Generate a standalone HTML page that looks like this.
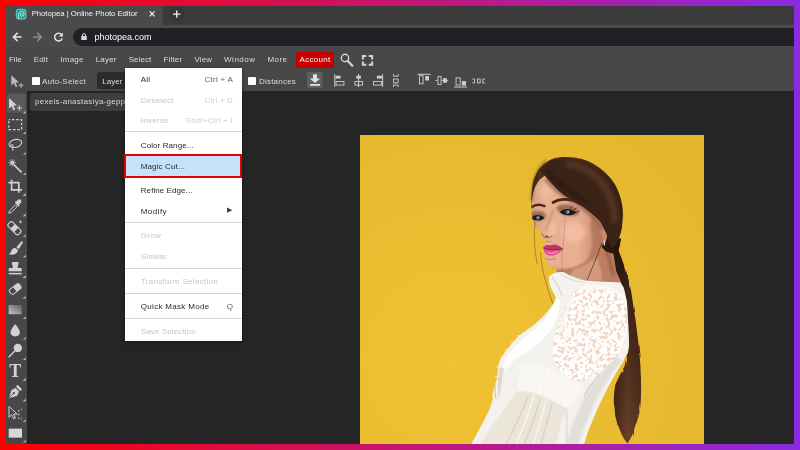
<!DOCTYPE html>
<html lang="en">
<head>
<meta charset="utf-8">
<title>Photopea | Online Photo Editor</title>
<style>
*{box-sizing:border-box;margin:0;padding:0}
html,body{width:800px;height:450px;overflow:hidden}
body{background:linear-gradient(90deg,#ff0000 0%,#8a2be2 100%);font-family:"Liberation Sans",sans-serif;position:relative}
#win{will-change:transform;position:absolute;left:6px;top:6px;width:787.8px;height:437.75px;overflow:hidden;background:#252525}
.abs{position:absolute}
/* all children of #win positioned relative to page coords minus 6 */
#tabstrip{left:0;top:0;width:788px;height:19px;background:#3b3b3b}
#tab{left:0;top:0;width:157px;height:19px;background:#4a4a4a;border-radius:4px 4px 0 0}
#tabtitle{left:25.7px;top:3.2px;font-size:7.7px;line-height:10px;color:#f4f4f4;white-space:nowrap}
#navbar{left:0;top:19px;width:788px;height:22px;background:#4a4a4a}
#omni{left:67px;top:22px;width:740px;height:17.5px;background:#202124;border-radius:9px}
#url{left:88.5px;top:25.8px;font-size:9px;line-height:11px;color:#ffffff;white-space:nowrap}
#menubar{left:0;top:41px;width:788px;height:22px;background:#474747}
.mi{position:absolute;top:49.3px;font-size:8px;line-height:10px;color:#dcdcdc;white-space:nowrap}
#account{left:290px;top:45.5px;width:37.5px;height:16px;background:#c60000;border-radius:3px}
#optbar{left:0;top:63px;width:788px;height:21.5px;background:#474747}
.ot{position:absolute;top:70.6px;font-size:8px;line-height:10px;color:#dcdcdc;white-space:nowrap}
.cb{position:absolute;width:7.5px;height:7.5px;background:#fff;border-radius:1px;top:71px}
#layersel{left:91px;top:66px;width:60px;height:17px;background:#2b2b2b;border-radius:2px}
#tools{left:0;top:83px;width:21.3px;height:362px;background:#474747;padding-top:1.5px}
#doctab{left:23.5px;top:86.5px;width:140px;height:18px;background:#3e3e3e;border-radius:3px}
#doctitle{left:29px;top:91.2px;font-size:8px;line-height:10px;letter-spacing:.27px;color:#d8d8d8;white-space:nowrap}
#photo{left:354px;top:128.5px;width:344.2px;height:309.3px;overflow:hidden}
#menu{left:119px;top:62.2px;width:116.5px;height:273px;background:#fff;box-shadow:0 1px 4px rgba(0,0,0,.4)}
.m{position:absolute;left:15.75px;margin-top:1.2px;font-size:8px;line-height:10px;color:#2a2a2a;white-space:nowrap}
.m.d{color:#c4c4c4}
.k{position:absolute;right:8.5px;margin-top:1.2px;font-size:8px;line-height:10px;color:#606060;white-space:nowrap}
.k.d{color:#cfcfcf}
.sep{position:absolute;left:0;width:116.5px;height:1px;background:#d4d4d4}
#hl{position:absolute;left:-.75px;top:85.6px;width:118px;height:24.4px;background:#c4e3fb;border:2px solid #e00000}
</style>
</head>
<body>
<div id="win">
  <div id="tabstrip" class="abs"></div>
  <div id="tab" class="abs"></div>
  <div id="tabtitle" class="abs">Photopea | Online Photo Editor</div>
  <div id="navbar" class="abs"></div>
  <div id="omni" class="abs"></div>
  <div id="url" class="abs">photopea.com</div>
  <div id="chromeicons" class="abs" style="left:0;top:0"><!--C--><svg width="200" height="42" viewBox="6 6 200 42" style="display:block">
<path d="M162.5 24.8 h4 q-4 0 -4 -4z" fill="#4a4a4a"/>
<circle cx="176.7" cy="14.1" r="8.3" fill="#363636"/>
<rect x="16.3" y="9.3" width="9.7" height="9.7" rx="2.2" fill="#17a093" stroke="#a9ebe2" stroke-width=".7"/><path d="M18.6 18.6 V14.6 Q18.6 11.3 21.6 11.3 Q24.2 11.4 24.2 13.9 Q24.1 16.3 21.7 16.3 Q20.2 16.2 20.2 14.6 Q20.3 13.4 21.5 13.4 Q22.5 13.5 22.4 14.4" fill="none" stroke="#b9f1ea" stroke-width=".9" stroke-linecap="round"/>
<path d="M149.7 11.4 L154.5 16.4 M154.5 11.4 L149.7 16.4" stroke="#f0f0f0" stroke-width="1.3"/>
<path d="M173 14.1 H180.4 M176.7 10.4 V17.8" stroke="#f0f0f0" stroke-width="1.3"/>
<path d="M21.6 37 H13.6 M17.6 32.9 L13.4 37 L17.6 41.1" fill="none" stroke="#e4e4e4" stroke-width="1.5" stroke-linejoin="miter"/>
<path d="M33.2 37 H41.2 M37.2 32.9 L41.4 37 L37.2 41.1" fill="none" stroke="#8c8c8c" stroke-width="1.5"/>
<path d="M61.6 34.6 A3.9 3.9 0 1 0 62.2 38.4" fill="none" stroke="#e4e4e4" stroke-width="1.5"/><path d="M62.9 32.4 V36.4 H58.9 Z" fill="#e4e4e4"/>
<rect x="81.2" y="36" width="5.6" height="4.1" rx=".6" fill="#d6d6d6"/><path d="M82.4 36.2 V35 Q82.4 33.6 84 33.6 Q85.6 33.6 85.6 35 V36.2" fill="none" stroke="#d6d6d6" stroke-width="1"/>
</svg><!--/C--></div>
  <div id="menubar" class="abs"></div>
  <span class="mi" style="left:3px;letter-spacing:-0.035px">File</span>
  <span class="mi" style="left:27.75px;letter-spacing:0.113px">Edit</span>
  <span class="mi" style="left:54.3px;letter-spacing:0.233px">Image</span>
  <span class="mi" style="left:89.7px;letter-spacing:0.197px">Layer</span>
  <span class="mi" style="left:122.7px;letter-spacing:0.044px">Select</span>
  <span class="mi" style="left:157.5px;letter-spacing:0.161px">Filter</span>
  <span class="mi" style="left:188.5px;letter-spacing:0.137px">View</span>
  <span class="mi" style="left:218px;letter-spacing:0.524px">Window</span>
  <span class="mi" style="left:261.4px;letter-spacing:0.441px">More</span>
  <div id="account" class="abs"></div>
  <span class="mi" style="left:293.6px;color:#fff;letter-spacing:0.299px" id="acct">Account</span>
  <div id="optbar" class="abs"></div>
  <div class="cb" style="left:26px"></div>
  <span class="ot" style="left:36px;letter-spacing:0.240px">Auto-Select</span>
  <div id="layersel" class="abs"></div>
  <span class="ot" style="left:96.3px;letter-spacing:-0.013px">Layer</span>
  <div class="cb" style="left:242px"></div>
  <span class="ot" style="left:253px;letter-spacing:0.208px">Distances</span>
  <div id="ppicons" class="abs" style="left:324px;top:41px"><!--P--><svg width="50" height="45" viewBox="330 47 50 45" style="display:block"><circle cx="345" cy="58" r="3.7" fill="none" stroke="#d2d2d2" stroke-width="1.4"/><path d="M347.8 61 L352.3 65.7" stroke="#d2d2d2" stroke-width="2.3" stroke-linecap="round"/><path d="M362.9 59.4 V56 H366.3 M368.7 56 H372.1 V59.4 M372.1 61.4 V64.8 H368.7 M366.3 64.8 H362.9 V61.4" fill="none" stroke="#d2d2d2" stroke-width="2"/></svg><!--/P--></div>
  <div id="mvicon" class="abs" style="left:3px;top:67px"><!--M--><svg width="16" height="16" viewBox="9 73 16 16" style="display:block"><path d="M11.3 75.3 V85.6 L13.9 83.3 L15.8 87.3 L17.4 86.5 L15.6 82.6 H19.1 Z" fill="#b8b8b8"/><path d="M18.6 85.3 H23.4 M21 82.9 V87.7" stroke="#b8b8b8" stroke-width="1.1"/></svg><!--/M--></div>
  <div id="opticons" class="abs" style="left:294px;top:62px"><!--O--><svg width="200" height="25" viewBox="300 68 200 25" style="display:block">
<rect x="306.9" y="71.75" width="15.6" height="16.25" rx="2" fill="#5e5e5e"/><path d="M313 74.2 h4 v4.4 h3.2 l-5.2 4.4 l-5.2 -4.4 h3.2z" fill="#e2e2e2"/><rect x="310" y="84" width="10" height="1.8" fill="#e2e2e2"/>
<path d="M334.75 74.20 L334.75 86.80" stroke="#cfcfcf" stroke-width="1.00"/><rect x="335.60" y="75.75" width="5.00" height="2.85" fill="#cfcfcf"/><rect x="336.05" y="81.55" width="7.90" height="3.50" fill="none" stroke="#cfcfcf" stroke-width="0.90"/>
<path d="M358.60 74.00 L358.60 87.00" stroke="#cfcfcf" stroke-width="1.00"/><rect x="356.25" y="75.75" width="4.65" height="2.85" fill="#cfcfcf"/><rect x="354.85" y="81.55" width="7.80" height="3.50" fill="none" stroke="#cfcfcf" stroke-width="0.90"/>
<path d="M382.60 74.20 L382.60 86.80" stroke="#cfcfcf" stroke-width="1.00"/><rect x="376.90" y="75.75" width="5.00" height="2.85" fill="#cfcfcf"/><rect x="373.55" y="81.55" width="7.90" height="3.50" fill="none" stroke="#cfcfcf" stroke-width="0.90"/>
<path d="M393.5 74.2 v2 h4.6 v-2 M393.5 87 v-2 h4.6 v2" fill="none" stroke="#cfcfcf" stroke-width=".9"/><rect x="393.55" y="79.05" width="4.50" height="3.80" fill="none" stroke="#cfcfcf" stroke-width="0.90"/>
<path d="M417.50 74.30 L430.60 74.30" stroke="#cfcfcf" stroke-width="1.00"/><rect x="419.45" y="75.70" width="3.60" height="8.10" fill="none" stroke="#cfcfcf" stroke-width="0.90"/><rect x="425.25" y="76.10" width="3.75" height="4.40" fill="#cfcfcf"/>
<path d="M435.25 80.50 L448.10 80.50" stroke="#cfcfcf" stroke-width="0.80"/><rect x="437.5" y="76.1" width="4" height="8.8" fill="#474747"/><rect x="437.95" y="76.55" width="3.10" height="7.90" fill="none" stroke="#cfcfcf" stroke-width="0.90"/><rect x="443.10" y="78.25" width="3.80" height="4.50" fill="#cfcfcf"/>
<path d="M454.00 87.00 L466.90 87.00" stroke="#cfcfcf" stroke-width="1.00"/><rect x="456.05" y="77.85" width="4.10" height="7.20" fill="none" stroke="#cfcfcf" stroke-width="0.90"/><rect x="461.90" y="81.10" width="4.10" height="4.40" fill="#cfcfcf"/>
<path d="M472.3 79 h2.2 v3.9 h-2.2 M485 79 h-2.2 v3.9 h2.2" fill="none" stroke="#cfcfcf" stroke-width=".9"/><rect x="477.35" y="79.05" width="2.80" height="3.80" fill="none" stroke="#cfcfcf" stroke-width="0.90"/>
</svg><!--/O--></div>
  <div id="tools" class="abs"><!--T--><svg width="21.3" height="353" viewBox="6 90.5 21.3 353" style="display:block">
<defs><linearGradient id="tg" x1="0" x2="1" y1="1" y2="0"><stop offset="0" stop-color="#c8c8c8"/><stop offset="1" stop-color="#5c5c5c"/></linearGradient></defs>
<path d="M7 112.3 V97 Q7 93 11 93 H25.5 V112.3 Z" fill="#5a5a5a"/>
<path d="M25.6 109.30 v3.6 h-3.6 q3.2 -.3 3.6 -3.6z" fill="#d2d2d2"/>
<path d="M25.6 129.86 v3.6 h-3.6 q3.2 -.3 3.6 -3.6z" fill="#d2d2d2"/>
<path d="M25.6 150.42 v3.6 h-3.6 q3.2 -.3 3.6 -3.6z" fill="#d2d2d2"/>
<path d="M25.6 170.98 v3.6 h-3.6 q3.2 -.3 3.6 -3.6z" fill="#d2d2d2"/>
<path d="M25.6 191.54 v3.6 h-3.6 q3.2 -.3 3.6 -3.6z" fill="#d2d2d2"/>
<path d="M25.6 212.10 v3.6 h-3.6 q3.2 -.3 3.6 -3.6z" fill="#d2d2d2"/>
<path d="M25.6 232.66 v3.6 h-3.6 q3.2 -.3 3.6 -3.6z" fill="#d2d2d2"/>
<path d="M25.6 253.22 v3.6 h-3.6 q3.2 -.3 3.6 -3.6z" fill="#d2d2d2"/>
<path d="M25.6 273.78 v3.6 h-3.6 q3.2 -.3 3.6 -3.6z" fill="#d2d2d2"/>
<path d="M25.6 294.34 v3.6 h-3.6 q3.2 -.3 3.6 -3.6z" fill="#d2d2d2"/>
<path d="M25.6 314.90 v3.6 h-3.6 q3.2 -.3 3.6 -3.6z" fill="#d2d2d2"/>
<path d="M25.6 335.46 v3.6 h-3.6 q3.2 -.3 3.6 -3.6z" fill="#d2d2d2"/>
<path d="M25.6 356.02 v3.6 h-3.6 q3.2 -.3 3.6 -3.6z" fill="#d2d2d2"/>
<path d="M25.6 376.58 v3.6 h-3.6 q3.2 -.3 3.6 -3.6z" fill="#d2d2d2"/>
<path d="M25.6 397.14 v3.6 h-3.6 q3.2 -.3 3.6 -3.6z" fill="#d2d2d2"/>
<path d="M25.6 417.70 v3.6 h-3.6 q3.2 -.3 3.6 -3.6z" fill="#d2d2d2"/>
<path d="M25.6 438.26 v3.6 h-3.6 q3.2 -.3 3.6 -3.6z" fill="#d2d2d2"/>
<g transform="translate(15.20 103.50)"><path d="M-6.2 -6 V4.6 L-3.6 2.2 L-1.7 6.3 L0 5.5 L-1.8 1.6 H1.8 Z" fill="#d2d2d2"/><path d="M1.8 4 H6.6 M4.2 1.6 V6.4" stroke="#d2d2d2" stroke-width="1.1" fill="none"/></g>
<g transform="translate(15.20 124.06)"><rect x="-6.4" y="-5" width="12.8" height="10" fill="none" stroke="#d2d2d2" stroke-width="1.2" stroke-dasharray="2.6 1.7" stroke-dashoffset="1.3"/></g>
<g transform="translate(15.20 144.62)"><ellipse cx="0.6" cy="-1.6" rx="6.4" ry="3.9" transform="rotate(-14)" fill="none" stroke="#d2d2d2" stroke-width="1.1"/><path d="M-3.6 1.8 q-1.8 -1.8 -.2 -2.6 q1.8 -.4 1.6 1.6 q-.4 2.2 -.2 4.8" fill="none" stroke="#d2d2d2" stroke-width="1"/></g>
<g transform="translate(15.20 165.18)"><path d="M-1.6 -1.2 L6.4 6.6" stroke="#d2d2d2" stroke-width="1.7"/><path d="M-3 -6.6 v7.2 M-6.6 -3 h7.2 M-5.6 -5.6 l5.2 5.2 M-.4 -5.6 l-5.2 5.2" stroke="#d2d2d2" stroke-width=".9"/><circle cx="-3" cy="-3" r="1.7" fill="#d2d2d2"/></g>
<g transform="translate(15.20 185.74)"><path d="M-3.6 -6.6 V3.6 H6.8 M-6.8 -3.6 H3.6 V6.6" fill="none" stroke="#d2d2d2" stroke-width="1.7"/></g>
<g transform="translate(15.20 206.30)"><path d="M-6.4 6.4 l.8 -2.6 l6 -6 l1.8 1.8 l-6 6 z" fill="none" stroke="#d2d2d2" stroke-width="1"/><path d="M.2 -3.6 l3.4 3.4 l1 -1 l-.9 -.9 l2 -2 q1.2 -1.6 -.2 -2.9 q-1.4 -1.2 -2.8 0 l-2 2 l-.9 -.9 z" fill="#d2d2d2"/></g>
<g transform="translate(15.20 226.86)"><g transform="translate(-.8 .8) rotate(-45)"><rect x="-3.1" y="-7.4" width="6.2" height="14.8" rx="2.2" fill="none" stroke="#d2d2d2" stroke-width="1.1"/><rect x="-3.1" y="-2.6" width="6.2" height="5.2" fill="#d2d2d2"/></g><path d="M5.2 -7 v3 M3.7 -5.5 h3" stroke="#d2d2d2" stroke-width=".9"/></g>
<g transform="translate(15.20 247.42)"><path d="M6.6 -6.8 l-5.4 6.2 l2.2 2 l4.4 -6.8 z" fill="#d2d2d2"/><path d="M.4 .2 l2.4 2.2 q-.6 3.4 -4.4 4.2 q-2.6 .5 -5 -.6 q2.4 -1 2.8 -3.4 q.8 -3.2 4.2 -2.4z" fill="#d2d2d2"/></g>
<g transform="translate(15.20 267.98)"><path d="M-2.6 -6.6 h5.2 q1 0 .8 1.2 l-.9 3.6 v1.4 h3 q1 0 1 1 v2.2 h-13 v-2.2 q0 -1 1 -1 h3 v-1.4 l-.9 -3.6 q-.2 -1.2 .8 -1.2z" fill="#d2d2d2"/><rect x="-6.5" y="4.4" width="13" height="1.5" fill="#d2d2d2"/></g>
<g transform="translate(15.20 288.54)"><g transform="scale(.88) rotate(-38)"><rect x="-7" y="-3.4" width="14" height="6.8" rx="2.4" fill="none" stroke="#d2d2d2" stroke-width="1.1"/><path d="M-.6 -3.4 h5.2 q2.4 0 2.4 2.4 v2 q0 2.4 -2.4 2.4 h-5.2z" fill="#d2d2d2"/></g></g>
<g transform="translate(15.20 309.10)"><rect x="-6.6" y="-4.6" width="13" height="9.2" fill="url(#tg)"/></g>
<g transform="translate(15.20 329.66)"><path transform="scale(.92)" d="M0 -6.8 q5 6 5 9.2 q0 4.4 -5 4.4 q-5 0 -5 -4.4 q0 -3.2 5 -9.2z" fill="#d2d2d2"/></g>
<g transform="translate(15.20 350.22)"><circle cx="2.6" cy="-2.8" r="4.2" fill="#d2d2d2"/><path d="M-.4 .4 L-6.6 6.6" stroke="#d2d2d2" stroke-width="1.4"/></g>
<g transform="translate(15.20 370.78)"><text x="0" y="6" text-anchor="middle" font-family="Liberation Serif,serif" font-weight="bold" font-size="18" fill="#d2d2d2">T</text></g>
<g transform="translate(15.20 391.34)"><path d="M2.4 -7 l4.6 4.6 l-2 1.6 l-4.2 -4.2 z" fill="#d2d2d2"/><path d="M.2 -4.2 l4 4 l-2.2 4.6 l-8.6 2.4 l2.4 -8.6 z M-6 6 l4.4 -4.4" fill="#d2d2d2" stroke="#474747" stroke-width=".7"/><circle cx="-1.4" cy="1.4" r="1.1" fill="#474747"/></g>
<g transform="translate(15.20 411.90)"><path d="M-6.2 -6 V5 L-3.4 2.4 L-1.5 6.4 L.2 5.6 L-1.6 1.8 H2 Z" fill="none" stroke="#d2d2d2" stroke-width="1"/><path d="M3.6 -2.6 v2 M3.6 1.2 v2 M3.6 5 v1.6 M5.6 -3 h1.2 M5.6 6.6 h1.2" stroke="#d2d2d2" stroke-width=".9"/></g>
<g transform="translate(15.20 432.76)"><rect x="-6.5" y="-4.6" width="13.3" height="9" fill="#d8d8d8"/></g>
</svg><!--/T--></div>
  <div id="doctab" class="abs"></div>
  <div id="doctitle" class="abs">pexels-anastasiya-gepp</div>
  <div id="photo" class="abs">
<svg width="344" height="309.3" viewBox="360 134.5 344 309.3" preserveAspectRatio="none" style="display:block">
<defs>
<radialGradient id="bg" cx="455" cy="360" r="310" gradientUnits="userSpaceOnUse"><stop offset="0" stop-color="#f0c232"/><stop offset=".5" stop-color="#eabc31"/><stop offset="1" stop-color="#e3b62d"/></radialGradient>
<linearGradient id="hairg" x1="548" y1="160" x2="622" y2="240" gradientUnits="userSpaceOnUse"><stop offset="0" stop-color="#50301f"/><stop offset=".4" stop-color="#432719"/><stop offset="1" stop-color="#28150e"/></linearGradient>
<linearGradient id="pony" x1="0" y1="240" x2="0" y2="443" gradientUnits="userSpaceOnUse"><stop offset="0" stop-color="#2c1810"/><stop offset=".45" stop-color="#4a2b1b"/><stop offset="1" stop-color="#6a4129"/></linearGradient>
<linearGradient id="ponys" x1="612" y1="0" x2="643" y2="0" gradientUnits="userSpaceOnUse"><stop offset="0" stop-color="#1c0e08" stop-opacity=".55"/><stop offset=".5" stop-color="#1c0e08" stop-opacity="0"/><stop offset="1" stop-color="#1c0e08" stop-opacity=".35"/></linearGradient>
<linearGradient id="skin" x1="532" y1="0" x2="606" y2="0" gradientUnits="userSpaceOnUse"><stop offset="0" stop-color="#d9a182"/><stop offset=".2" stop-color="#e8b092"/><stop offset=".6" stop-color="#e9b094"/><stop offset="1" stop-color="#c08364"/></linearGradient>
<filter id="b05" x="-10%" y="-10%" width="120%" height="120%"><feGaussianBlur stdDeviation=".45"/></filter>
<filter id="b1" x="-30%" y="-30%" width="160%" height="160%"><feGaussianBlur stdDeviation="1.1"/></filter>
<filter id="b2" x="-40%" y="-40%" width="180%" height="180%"><feGaussianBlur stdDeviation="2.4"/></filter>
<filter id="b4" x="-40%" y="-40%" width="180%" height="180%"><feGaussianBlur stdDeviation="4"/></filter>
<filter id="lacef" x="0" y="0" width="100%" height="100%"><feTurbulence type="fractalNoise" baseFrequency=".28" numOctaves="2" seed="11" result="n"/><feColorMatrix in="n" type="matrix" values="0 0 0 0 1  0 0 0 0 1  0 0 0 0 1  0 0 0 7 -2.6" result="w"/><feComposite in="w" in2="SourceGraphic" operator="in"/></filter>
<filter id="frz" x="-5%" y="-5%" width="110%" height="110%"><feTurbulence type="fractalNoise" baseFrequency=".35 .05" numOctaves="2" seed="3" result="n"/><feDisplacementMap in="SourceGraphic" in2="n" scale="3"/></filter>
</defs>
<rect x="360" y="134" width="344" height="311" fill="url(#bg)"/>
<!-- ponytail -->
<g filter="url(#frz)">
<path id="pt" d="M611 238 L612 250 C613 258 614 264 615 270 C618 277 621 284 623 290 C624.5 297 625.5 304 626 310 C627 317 627.6 324 628 330 L629 345 C627.5 352 626 359 624.5 366 C621 372 618 378 615.5 384 C614 391 613.6 398 614 405 C614.6 412 616 420 618.5 426 C621 433 624 439 627.5 443 C631 438 633.5 432 635 426 C638 419 639.8 412 640.4 405 C641 398 641.2 391 641 384 L640.4 366 C640 359 639.4 352 638.6 345 C637.6 336 636.6 328 635.6 320 L634 310 C633 303 632 296 631 290 C629.6 283 628 276 626 270 C623.5 263 621 256 618.5 250 L621 238 Z" fill="url(#pony)"/>
</g>
<path d="M611 238 L612 250 C613 258 614 264 615 270 C618 277 621 284 623 290 C624.5 297 625.5 304 626 310 C627 317 627.6 324 628 330 L629 345 C627.5 352 626 359 624.5 366 C621 372 618 378 615.5 384 C614 391 613.6 398 614 405 C614.6 412 616 420 618.5 426 C621 433 624 439 627.5 443 C631 438 633.5 432 635 426 C638 419 639.8 412 640.4 405 C641 398 641.2 391 641 384 L640.4 366 C640 359 639.4 352 638.6 345 C637.6 336 636.6 328 635.6 320 L634 310 C633 303 632 296 631 290 C629.6 283 628 276 626 270 C623.5 263 621 256 618.5 250 L621 238 Z" fill="url(#ponys)"/>
<!-- neck -->
<path d="M566 266 L604 246 L613 250 L616 270 L622 284 L560 284 L556 270 Z" fill="#bb7f60"/>
<path d="M574 268 C582 266 590 262 597 257 C600 264 602 272 602 281 L566 281 Z" fill="#d29a7b" filter="url(#b1)"/>
<path d="M606 248 C609 256 611 266 614 276" stroke="#8e5a42" stroke-width="4" fill="none" opacity=".6" filter="url(#b1)"/>
<path d="M600 236 L613 238 L616 254 L606 251 L601 246 Z" fill="#2c1810"/>
<!-- head hair back -->
<path d="M531.5 208 L531.5 199 C531.6 193 532 187 533 182 C534.2 177.5 536 173.5 538 170 C540.4 166.6 543 164 546 162 C548 160.4 550 159.2 552 158.5 C556.5 157 561 156.4 566 156.5 C571.5 156.6 577 157.2 582 158.5 C587 160 592 162.2 596 165 C600 167.6 604 170.6 607 174 C610 177 613 180.5 615 184 C617.2 188 619 192 620 196 C621.4 200 622.2 204 622.6 208 C623 212 623 216 622.5 220 C622.2 224 621.8 228 621 231 C620.2 234 619 236.4 618 238 L615 243 L621 238 L618.5 250 L611 250 L604 246 L560 200 Z" fill="url(#hairg)" filter="url(#b05)"/>
<!-- face -->
<path d="M545 175.3 C543 176.4 541.2 177.8 539.7 179.3 C537.4 182 535.6 185.2 534.3 188.7 C533.3 191.4 532.7 194 532.3 196.7 C532 199 531.8 201.2 531.7 203.3 C531.6 205.2 531.6 207.2 531.6 209 C531.4 211.6 531.6 214 532 216 C532.4 218.2 532.8 220.2 533.5 222 C534.4 224 535.4 225.6 536.5 227 C537.6 228.4 538.8 229.6 540 230.6 C540.8 231.6 541.4 232.8 541.4 234 C541.4 234.8 541 235.6 541 236.3 C541.6 237.4 542.6 238 543.5 238.6 C544.4 239 545.2 239.4 545.8 240 C545.6 241 545 241.8 544.6 242.6 C544 243.4 543.4 244 543 244.8 C542.8 246.6 543.4 248.4 543.8 250 C544.2 252 544.6 254 544.8 256 C545 257.8 545.6 259.4 546.4 261 C547.2 262.8 548.4 264.2 549.6 265.6 C551.6 267.2 554.4 268 557 268.4 C560 268.9 563 269.1 566 269 C570 268.4 574 267.2 578 265.6 C581.4 264 584.8 262.2 588 260 C591.2 257.8 594.2 255.2 596.8 252.4 C598.6 250.4 600.2 248.2 601.6 246 C602.8 244.4 603.8 242.8 604.4 241 C605.6 238 606.4 236 606.7 234 C605 230 603 226 601 222 C597 217.4 592.6 213.4 587.7 210 C584.6 207.6 581.4 205.4 578.3 203.3 C573.8 200.8 569.4 198.2 565 195.3 C561.6 193 558.4 190.4 555.7 187.3 C552 183.6 548.4 179.6 545 175.3 Z" fill="url(#skin)"/>
<clipPath id="fcp"><path d="M545 175.3 C543 176.4 541.2 177.8 539.7 179.3 C537.4 182 535.6 185.2 534.3 188.7 C533.3 191.4 532.7 194 532.3 196.7 C532 199 531.8 201.2 531.7 203.3 C531.6 205.2 531.6 207.2 531.6 209 C531.4 211.6 531.6 214 532 216 C532.4 218.2 532.8 220.2 533.5 222 C534.4 224 535.4 225.6 536.5 227 C537.6 228.4 538.8 229.6 540 230.6 C540.8 231.6 541.4 232.8 541.4 234 C541.4 234.8 541 235.6 541 236.3 C541.6 237.4 542.6 238 543.5 238.6 C544.4 239 545.2 239.4 545.8 240 C545.6 241 545 241.8 544.6 242.6 C544 243.4 543.4 244 543 244.8 C542.8 246.6 543.4 248.4 543.8 250 C544.2 252 544.6 254 544.8 256 C545 257.8 545.6 259.4 546.4 261 C547.2 262.8 548.4 264.2 549.6 265.6 C551.6 267.2 554.4 268 557 268.4 C560 268.9 563 269.1 566 269 C570 268.4 574 267.2 578 265.6 C581.4 264 584.8 262.2 588 260 C591.2 257.8 594.2 255.2 596.8 252.4 C598.6 250.4 600.2 248.2 601.6 246 C602.8 244.4 603.8 242.8 604.4 241 C605.6 238 606.4 236 606.7 234 C605 230 603 226 601 222 C597 217.4 592.6 213.4 587.7 210 C584.6 207.6 581.4 205.4 578.3 203.3 C573.8 200.8 569.4 198.2 565 195.3 C561.6 193 558.4 190.4 555.7 187.3 C552 183.6 548.4 179.6 545 175.3 Z"/></clipPath>
<!-- face shading -->
<g clip-path="url(#fcp)">
<ellipse cx="574" cy="232" rx="12" ry="10" fill="#f6c2ab" opacity=".75" filter="url(#b2)"/>
<ellipse cx="545" cy="192" rx="6" ry="8" fill="#f2c0a2" opacity=".7" filter="url(#b2)"/>
<ellipse cx="552" cy="228" rx="5" ry="7" fill="#f4c4aa" opacity=".6" filter="url(#b1)"/>
<path d="M592 214 C598 222 602 232 603 244 C600 252 594 258 586 262 C592 252 594 238 590 226 Z" fill="#a2654b" opacity=".55" filter="url(#b1)"/>
<path d="M548 266 C556 269 566 269 576 266 C584 263 592 258 597 253 L598 258 C590 266 576 272 562 272 C556 272 551 270 548 266 Z" fill="#9c6148" opacity=".55" filter="url(#b1)"/>
<path d="M533 212 C533.4 220 534 226 536.4 230" stroke="#b87c5e" stroke-width="2" fill="none" opacity=".6" filter="url(#b1)"/>
</g>
<g clip-path="url(#fcp)"><path d="M546 178 C552 186 560 193 570 199 C582 206 594 214 602 228" stroke="#8a563c" stroke-width="5" fill="none" opacity=".55" filter="url(#b1)"/>
</g>
<!-- hair sweep right over forehead -->
<path d="M545 175.3 C548.4 179.6 552 183.6 555.7 187.3 C558.4 190.4 561.6 193 565 195.3 C569.4 198.2 573.8 200.8 578.3 203.3 C581.4 205.4 584.6 207.6 587.7 210 C592.6 213.4 597 217.4 601 222 C603.4 226 605.4 230 606.7 234 C608 238 609 243 611 248 L618 242 L622 226 L620 200 L608 178 L590 164 L566 157.5 L550 160 L540 170 Z" fill="#3a2116" filter="url(#b05)"/>
<path d="M566 163 C580 164 594 172 604 185 C611 196 615 208 615 222" stroke="#7a5038" stroke-width="6" fill="none" opacity=".5" filter="url(#b2)"/>
<path d="M548 170 C556 182 572 192 590 204" stroke="#241209" stroke-width="2.6" fill="none" opacity=".5" filter="url(#b1)"/>
<path d="M546 160 C541 164 537 170 534.6 178 C533 184 532 192 531.6 200" stroke="#241209" stroke-width="2" fill="none" opacity=".4" filter="url(#b1)"/>
<g clip-path="url(#fcp)">
<!-- brows -->
<path d="M531.8 206.6 C535 204 540 203.6 544.5 205.6" stroke="#472718" stroke-width="2.4" fill="none" stroke-linecap="round"/>
<path d="M553 202 C560 197.4 572 197.6 580.4 203.6" stroke="#452617" stroke-width="2.8" fill="none" stroke-linecap="round"/>
<!-- eye shadow + eyes -->
<ellipse cx="568" cy="209.6" rx="11.5" ry="5.6" fill="#7d4f3c" opacity=".7" filter="url(#b1)" transform="rotate(12 568 209.6)"/>
<ellipse cx="538" cy="215.4" rx="8" ry="5" fill="#7d4f3c" opacity=".65" filter="url(#b1)"/>
<path d="M553.4 209 C551 216 548 224 546 230" stroke="#c48a6a" stroke-width="2.4" fill="none" opacity=".7" filter="url(#b1)"/>
<path d="M559.6 211.6 C563.6 207.4 571 207.2 576.4 212 C572 215.8 564 216 559.6 211.6 Z" fill="#241a1c"/>
<path d="M531 217.6 C534.6 213.6 540.6 213.6 544.4 217.4 C541 221 534.6 221 531 217.6 Z" fill="#241a1c"/>
<circle cx="567.6" cy="211.7" r="2" fill="#4f7688"/><circle cx="537.8" cy="217.4" r="1.8" fill="#4f7688"/>
<circle cx="568.2" cy="211" r=".7" fill="#fff"/><circle cx="538.3" cy="216.8" r=".6" fill="#fff"/>
<path d="M576.4 212 l3 -1.6 M531 217.6 l-2 -1 M574 209.4 l2.4 -2 M570.6 208 l1.2 -2.2" stroke="#241a1c" stroke-width=".8"/>
<!-- nose -->
<path d="M541.6 232.4 C542.6 235.4 545.4 237.6 548.8 237.2 C550.4 237 551.6 236.2 552.2 235" stroke="#b06e50" stroke-width="1.1" fill="none" opacity=".9"/>
<ellipse cx="546.8" cy="236" rx="1.7" ry=".9" fill="#6e3a28" opacity=".85"/>
<path d="M546 240.6 C548 241.8 550 241.6 551.6 240.6" stroke="#b87a5c" stroke-width="1" fill="none" opacity=".7"/>
<!-- lips -->
<path d="M543 247.2 C545 244.6 548 243.8 550.4 245 C553 243.6 556.6 244 559 245.4 C560.6 246.4 562 247.4 563 248.4 C560.4 251.8 556.6 254.4 552 255.2 C548.6 255.6 546 254.4 544.6 252 C543.8 250.4 543.2 248.8 543 247.2 Z" fill="#e2508c"/>
<path d="M543 247.2 C545 244.6 548 243.8 550.4 245 C553 243.6 556.6 244 559 245.4 C560.6 246.4 562 247.4 563 248.4 C557 249.4 549 249.4 543 247.2 Z" fill="#c2356c"/>
<path d="M543.6 247.8 C549 249.6 556 249.4 562.6 248.4" stroke="#8a1c46" stroke-width=".9" fill="none"/>
<path d="M547 252 C550 253.4 554.6 252.6 557.6 250.8" stroke="#f59bbd" stroke-width="1.2" fill="none" opacity=".85" filter="url(#b05)"/>
<path d="M546 258 C549 259.6 553 259.4 556 258" stroke="#b87a5c" stroke-width="1.4" fill="none" opacity=".6" filter="url(#b05)"/>
</g>
<!-- ear + earring -->
<path d="M603 230 C606 231 607.6 234 606.8 238 C606 241 604.4 243 603 244 Z" fill="#c98b6c"/>
<path d="M604.6 240 v5" stroke="#efe9e2" stroke-width="1"/>
<!-- strands -->
<path d="M565 215 C565 226 563.6 240 562.4 252 C561.6 260 561.6 266 562.4 272" stroke="#4a2a1c" stroke-width=".7" fill="none" opacity=".28"/>
<path d="M540.6 252 C541 262 543 272 546 282 C548.6 292 552 302 556.6 312" stroke="#4a2a1c" stroke-width=".8" fill="none" opacity=".5"/>
<path d="M535 222 C533.6 236 534.6 250 537.4 264" stroke="#4a2a1c" stroke-width=".7" fill="none" opacity=".55"/>
<path d="M602 242 C598 254 592 268 586 282" stroke="#3a2016" stroke-width=".9" fill="none" opacity=".7"/>
<!-- blouse -->
<path id="bl" d="M549 276 C553 272.4 558 271 563 271.6 C567 273.4 570 275.4 574 276.4 C578 278 582 279.4 586 280 C597 281 609 281.4 620 282 C622 284 623.4 286 624 288 C625 292 626 296 626.6 300 C627.4 306 627.8 313 628 320 C628.6 328 629 337 629 345 L628 352 L624.5 358 C623.4 361 622 364 620 366 C616.6 372 613 378 609.5 384 C606 391 602.4 398 599 405 C596 412 593 419 590 426 C587.6 432 585.6 438 584 444 L471 444 C473.4 439.6 475.8 435.2 478 431 C482 424 485.6 417 489 410 C490.6 406 492 402 493 398 C492.4 395.6 492.4 393.2 493 391 C494 386.6 495.6 382.4 497 378 C497.4 372.4 498 367 499 362 C501 357.4 503.8 353 507 349 C510.8 344 514.8 339.4 519 335 C523.4 331.4 527.8 328.6 532 326 C535.6 323 539 320 542 317 C546 313 549.4 309 552 305 C554.4 302 556 299.4 556 297 C554 293 551.4 289 550 285 C549 282 548.6 279 549 276 Z" fill="#f4f2ee"/>
<clipPath id="bc"><use href="#bl"/></clipPath>
<g clip-path="url(#bc)">
<!-- sheer lace sleeve: skin showing through -->
<path d="M576 290 C586 286.6 598 286 608 288 C616 290 621 295 624 302 C626.6 310 627.4 320 627 330 C625.6 340 622 350 615 358 C608 366 600 373 590 378 C583 381 575 381.4 569 378 C562 374 557 367 554 359 C552 350 553 340 556 330 C559 318 564 306 570 296 Z" fill="#f0d6c4"/>
<path d="M576 290 C586 286.6 598 286 608 288 C616 290 621 295 624 302 C626.6 310 627.4 320 627 330 C625.6 340 622 350 615 358 C608 366 600 373 590 378 C583 381 575 381.4 569 378 C562 374 557 367 554 359 C552 350 553 340 556 330 C559 318 564 306 570 296 Z" fill="#fff" filter="url(#lacef)"/>
<path d="M572 296 C568 306 562 318 560 332" stroke="#f7f4f0" stroke-width="5" fill="none" opacity=".9" filter="url(#b1)"/>
<path d="M580 288 C592 285 606 286 616 291 C622 295 626 300 628 306" stroke="#faf8f5" stroke-width="3.4" fill="none"/>
<!-- cuff lace band -->
<path d="M521 364 C533 362 545 365 556 371 C566 377 575 382 584 384 C580 392 574 400 566 408 C556 402 545 396 534 392 C528 390 522 390 517 391 Z" fill="#f7f4ef"/>
<path d="M521 364 C533 362 545 365 556 371 C566 377 575 382 584 384 C580 392 574 400 566 408 C556 402 545 396 534 392 C528 390 522 390 517 391 Z" fill="#d9c3ae" opacity=".35" filter="url(#lacef)"/>
<!-- chiffon sleeve lower -->
<path d="M517 391 C528 390 540 394 552 400 C558 403 563 406 566 408 C562 420 558 432 556 444 L480 444 C490 428 504 408 517 391 Z" fill="#ece5d9"/>
<path d="M528 396 C522 412 514 428 506 444 M540 398 C536 414 530 430 524 444 M552 403 C548 418 544 432 541 444" stroke="#d9d0c2" stroke-width="1.6" fill="none" opacity=".8" filter="url(#b05)"/>
<path d="M534 394 C530 410 523 428 516 444 M546 400 C542 416 537 432 533 444" stroke="#faf8f4" stroke-width="1.6" fill="none" opacity=".8" filter="url(#b05)"/>
<!-- right body folds -->
<path d="M622 360 C612 372 602 388 594 404 C588 418 582 432 578 444 L566 444 C570 430 576 414 584 398 C592 384 604 368 616 356 Z" fill="#dedad2" opacity=".8" filter="url(#b1)"/>
<path d="M600 374 C594 380 588 388 584 396" stroke="#cfcac0" stroke-width="1.6" fill="none" opacity=".8" filter="url(#b05)"/>
<path d="M566 408 C568 420 568 432 566 444" stroke="#d4cec3" stroke-width="2" fill="none" opacity=".7" filter="url(#b1)"/>
<!-- front chest highlight & shadow -->
<path d="M556 297 C553 308 546 318 538 326 C528 334 518 342 510 352 C504 360 500 370 499 380 C503 370 510 362 520 356 C532 348 544 340 552 328 C558 318 560 308 560 300 Z" fill="#ffffff" opacity=".9" filter="url(#b05)"/>
<path d="M497 372 C495 380 494 390 496 398" stroke="#cbc3b5" stroke-width="1.4" fill="none" opacity=".9"/>
<path d="M500 366 C497 378 497 390 499 398 C501 390 502 378 504 368 Z" fill="#d9d2c6" opacity=".8" filter="url(#b05)"/>
<!-- collar ruffle shading -->
<path d="M552 276 C556 282 560 288 562 296" stroke="#dcd6cc" stroke-width="1.4" fill="none" opacity=".9"/>
<path d="M560 273 C566 278 576 281 586 282" stroke="#e2ddd4" stroke-width="1.2" fill="none" opacity=".9"/>
</g>
<!-- fringe on blouse left edge -->
<path d="M520 336 l-3 -1 M514 342 l-3.4 -.6 M508 349 l-3.2 -.2 M503 357 l-3 .2 M499.6 366 l-3 .6 M498 376 l-3.2 .4" stroke="#f6f3ee" stroke-width=".9" opacity=".9"/>
<!-- ponytail shadow over shoulder edge -->

</svg>
  </div>
  <div id="menu" class="abs">
    <div id="hl"></div>
    <span class="m" style="top:6.0px;letter-spacing:0.170px">All</span><span class="k" style="top:6.0px;letter-spacing:0.256px">Ctrl + A</span>
    <span class="m d" style="top:26.3px;letter-spacing:0.234px">Deselect</span><span class="k d" style="top:26.3px;letter-spacing:0.145px">Ctrl + D</span>
    <span class="m d" style="top:46.5px;letter-spacing:0.238px">Inverse</span><span class="k d" style="top:46.5px;letter-spacing:0.195px">Shift+Ctrl + I</span>
    <span class="m" style="top:71.5px;letter-spacing:0.100px">Color Range...</span>
    <span class="m" style="top:92.3px;letter-spacing:0.130px">Magic Cut...</span>
    <span class="m" style="top:117.0px;letter-spacing:0.075px">Refine Edge...</span>
    <span class="m" style="top:137.3px;letter-spacing:0.448px">Modify</span>
    <span class="m d" style="top:162.0px;letter-spacing:0.344px">Grow</span>
    <span class="m d" style="top:182.5px;letter-spacing:0.257px">Similar</span>
    <span class="m d" style="top:208.0px;letter-spacing:0.326px">Transform Selection</span>
    <span class="m" style="top:233.0px;letter-spacing:0.315px">Quick Mask Mode</span><span class="k" style="top:233.0px">Q</span>
    <span class="m d" style="top:258.0px;letter-spacing:0.116px">Save Selection</span>
    <div class="sep" style="top:62.7px"></div>
    <div class="sep" style="top:153.5px"></div>
    <div class="sep" style="top:199.5px"></div>
    <div class="sep" style="top:224.8px"></div>
    <div class="sep" style="top:249.8px"></div>
    <span class="abs" style="left:102px;top:138px;font-size:6.5px;line-height:8px;color:#444">&#9654;</span>
  </div>
</div>
</body>
</html>
